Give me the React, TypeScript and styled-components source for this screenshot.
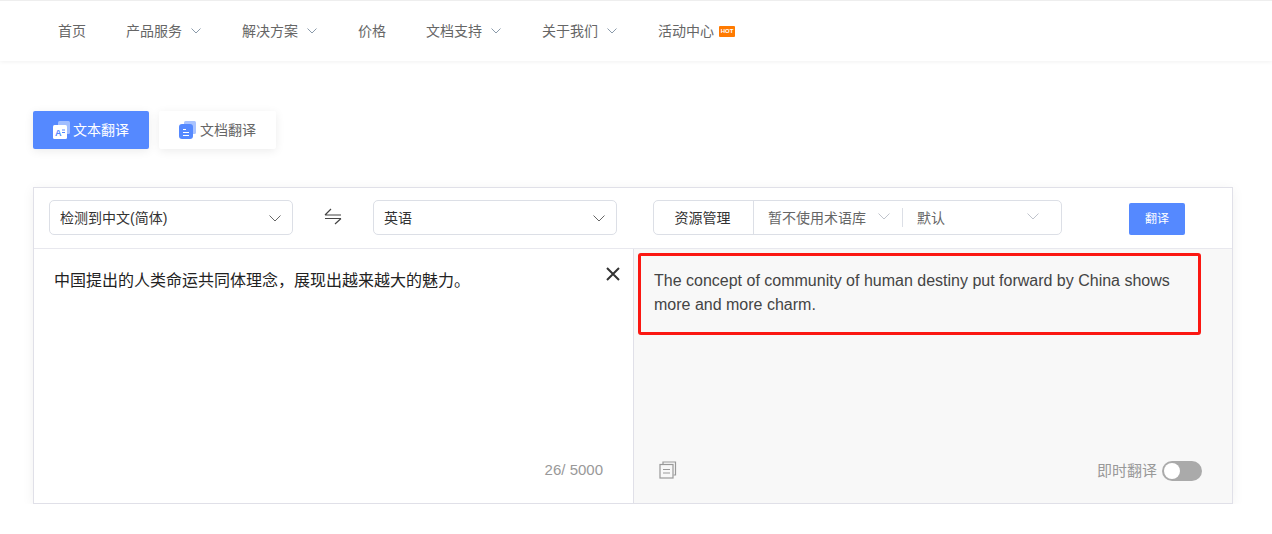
import styled, { createGlobalStyle } from "styled-components";

const GlobalStyle = createGlobalStyle`
  html, body {
    margin: 0;
    padding: 0;
    background: #fff;
  }
  body {
    font-family: "Liberation Sans", "Noto Sans CJK SC", sans-serif;
  }
  * {
    box-sizing: border-box;
  }
`;

const Nav = styled.nav`
  display: flex;
  align-items: center;
  gap: 40px;
  height: 61px;
  padding-left: 58px;
  border-top: 1px solid #eee;
  background: #fff;
  box-shadow: 0 1px 4px rgba(0, 0, 0, 0.06);
`;

const NavItem = styled.div`
  display: flex;
  align-items: center;
  gap: 5px;
  color: #666;
  font-size: 14px;
  line-height: 20px;
`;

const NavCaret = styled.svg`
  display: block;
  width: 10px;
  height: 6px;
  margin-left: 4px;
  margin-right: 1px;
  fill: none;
  stroke: #8a9aaa;
  stroke-width: 1;
`;

const HotBadge = styled.span`
  display: block;
  width: 16px;
  height: 11px;
  border-radius: 1px;
  background: #ff7a00;
  color: #fff;
  font-size: 6px;
  font-weight: 700;
  line-height: 11px;
  text-align: center;
`;

const Main = styled.main`
  padding: 50px 39px 0 33px;
`;

const Tabs = styled.div`
  display: flex;
  gap: 10px;
  margin-bottom: 38px;
`;

const Tab = styled.button<{ $active?: boolean }>`
  display: flex;
  align-items: center;
  justify-content: center;
  gap: ${(p) => (p.$active ? "3px" : "4px")};
  width: ${(p) => (p.$active ? "116px" : "117px")};
  height: 38px;
  padding: 0;
  border: none;
  border-radius: 2px;
  background: ${(p) => (p.$active ? "#5589ff" : "#fff")};
  box-shadow: 0 2px 10px rgba(0, 0, 0, 0.08);
  color: ${(p) => (p.$active ? "#fff" : "#666")};
  font-family: inherit;
  font-size: 14px;
`;

const TabLabel = styled.span`
  margin-bottom: 2px;
`;

const TabIcon = styled.svg`
  display: block;
  width: 17px;
  height: 18px;
`;

const Card = styled.section`
  height: 317px;
  border: 1px solid #e0e0e8;
  box-shadow: 0 2px 12px rgba(0, 0, 0, 0.06);
  display: flex;
  flex-direction: column;
`;

const Toolbar = styled.div`
  display: flex;
  height: 61px;
  border-bottom: 1px solid #e8e8ee;
`;

const ToolbarSide = styled.div`
  display: flex;
  align-items: center;
  width: 599px;
  padding-left: 15px;
  padding-bottom: 1px;
`;

const ToolbarRight = styled.div`
  display: flex;
  align-items: center;
  flex: 1;
  padding-left: 20px;
  padding-bottom: 1px;
`;

const Select = styled.div`
  display: flex;
  align-items: center;
  justify-content: space-between;
  width: 244px;
  height: 35px;
  padding: 0 11px 0 10px;
  border: 1px solid #dcdfe6;
  border-radius: 5px;
  color: #333;
  font-size: 14px;
`;

const FieldLabel = styled.span`
  margin-bottom: 2px;
`;

const SelectCaret = styled.svg<{ $light?: boolean }>`
  display: block;
  width: 12px;
  height: 7px;
  flex: none;
  margin-top: ${(p) => (p.$light ? "-3px" : "2px")};
  fill: none;
  stroke: ${(p) => (p.$light ? "#c0c4cc" : "#666")};
  stroke-width: 1;
`;

const SwapButton = styled.div`
  display: flex;
  justify-content: center;
  width: 80px;
  margin-top: -3px;
`;

const SwapIcon = styled.svg`
  display: block;
  width: 18px;
  height: 17px;
  fill: none;
  stroke: #444;
  stroke-width: 1.2;
`;

const ResourceGroup = styled.div`
  display: flex;
  align-items: center;
  width: 409px;
  height: 35px;
  border: 1px solid #dcdfe6;
  border-radius: 5px;
  font-size: 14px;
`;

const ResourceLabel = styled.div`
  display: flex;
  align-items: center;
  justify-content: center;
  width: 100px;
  height: 100%;
  padding-right: 2px;
  border-right: 1px solid #dcdfe6;
  color: #333;
`;

const ResourcePick = styled.div<{ $width: number; $divided?: boolean; $end: number }>`
  display: flex;
  align-items: center;
  justify-content: space-between;
  width: ${(p) => p.$width}px;
  height: 19px;
  padding: 0 ${(p) => p.$end}px 0 14px;
  border-right: ${(p) => (p.$divided ? "1px solid #dcdfe6" : "none")};
  color: #666;
  font-size: 14px;
`;

const TranslateButton = styled.button`
  width: 56px;
  height: 32px;
  margin-top: 2px;
  margin-left: 67px;
  padding: 0 0 2px;
  border: none;
  border-radius: 2px;
  background: #5589ff;
  color: #fff;
  font-family: inherit;
  font-size: 12px;
`;

const Panes = styled.div`
  display: flex;
  flex: 1;
  min-height: 0;
`;

const SourcePane = styled.div`
  display: flex;
  flex-direction: column;
  justify-content: space-between;
  width: 600px;
  padding: 20px 30px 21px 20px;
  border-right: 1px solid #e0e0e8;
`;

const SourceRow = styled.div`
  display: flex;
  justify-content: space-between;
  align-items: flex-start;
`;

const SourceText = styled.div`
  color: #222;
  font-size: 16px;
  line-height: 24px;
`;

const ClearIcon = styled.svg`
  display: block;
  width: 14px;
  height: 14px;
  margin-top: -2px;
  margin-right: -17px;
  fill: none;
  stroke: #333;
  stroke-width: 2;
`;

const Counter = styled.div`
  align-self: flex-end;
  color: #999;
  font-size: 15px;
  line-height: 24px;
`;

const ResultPane = styled.div`
  position: relative;
  flex: 1;
  display: flex;
  flex-direction: column;
  justify-content: space-between;
  padding: 20px 30px 21px 20px;
  background: #f8f8f8;
`;

const ResultText = styled.div`
  color: #444;
  font-size: 16px;
  line-height: 24px;
  width: 530px;
`;

const Highlight = styled.div`
  position: absolute;
  left: 4px;
  top: 4px;
  width: 563px;
  height: 82px;
  border: 3px solid #fb1712;
  border-radius: 3px;
`;

const ResultFooter = styled.div`
  display: flex;
  align-items: center;
  justify-content: space-between;
  height: 24px;
  padding-left: 5px;
`;

const CopyIcon = styled.svg`
  display: block;
  width: 18px;
  height: 18px;
  fill: none;
  stroke: #999;
  stroke-width: 1.2;
`;

const InstantToggle = styled.div`
  display: flex;
  align-items: center;
  gap: 5px;
  color: #999;
  font-size: 15px;
`;

const InstantLabel = styled.span`
  margin-bottom: 2px;
`;

const Switch = styled.div`
  display: flex;
  align-items: center;
  width: 40px;
  height: 20px;
  margin-top: 2px;
  padding-left: 2px;
  border-radius: 10px;
  background: #aaa;
`;

const SwitchKnob = styled.div`
  width: 16px;
  height: 16px;
  border-radius: 50%;
  background: #fff;
`;

const navItems = [
  { label: "首页" },
  { label: "产品服务", caret: true },
  { label: "解决方案", caret: true },
  { label: "价格" },
  { label: "文档支持", caret: true },
  { label: "关于我们", caret: true },
  { label: "活动中心", hot: true },
];

const CaretPath = () => <path d="M0.5 0.5 L5 5 L9.5 0.5" />;
const BigCaretPath = () => <path d="M0.5 0.5 L6 6 L11.5 0.5" />;

export default function App() {
  return (
    <>
      <GlobalStyle />
      <Nav>
        {navItems.map((item) => (
          <NavItem key={item.label}>
            {item.label}
            {item.caret && (
              <NavCaret viewBox="0 0 10 6">
                <CaretPath />
              </NavCaret>
            )}
            {item.hot && <HotBadge>HOT</HotBadge>}
          </NavItem>
        ))}
      </Nav>
      <Main>
        <Tabs>
          <Tab $active>
            <TabIcon viewBox="0 0 17 18">
              <rect x="5" y="0" width="12" height="13" rx="1.5" fill="#fff" fillOpacity="0.45" />
              <rect x="0" y="4" width="14" height="14" rx="1.5" fill="#fff" />
              <text x="2" y="14.5" fontSize="9" fontWeight="700" fill="#5589ff">
                A
              </text>
              <path d="M9 9h3M9 11.5h3" stroke="#5589ff" strokeWidth="1" />
            </TabIcon>
            <TabLabel>文本翻译</TabLabel>
          </Tab>
          <Tab>
            <TabIcon viewBox="0 0 17 18">
              <rect x="5" y="0" width="12" height="13" rx="1.5" fill="#a9c3ff" />
              <rect x="0" y="3" width="14" height="15" rx="3" fill="#5589ff" />
              <path d="M4 8.5h3M4 11.5h6M4 14.5h6" stroke="#fff" strokeWidth="1.2" />
            </TabIcon>
            <TabLabel>文档翻译</TabLabel>
          </Tab>
        </Tabs>
        <Card>
          <Toolbar>
            <ToolbarSide>
              <Select>
                <FieldLabel>检测到中文(简体)</FieldLabel>
                <SelectCaret viewBox="0 0 12 7">
                  <BigCaretPath />
                </SelectCaret>
              </Select>
              <SwapButton>
                <SwapIcon viewBox="0 0 18 17">
                  <path d="M1 7 H17 M1 7 L7 1 M1 10.5 H17 M17 10.5 L11 16" />
                </SwapIcon>
              </SwapButton>
              <Select>
                <FieldLabel>英语</FieldLabel>
                <SelectCaret viewBox="0 0 12 7">
                  <BigCaretPath />
                </SelectCaret>
              </Select>
            </ToolbarSide>
            <ToolbarRight>
              <ResourceGroup>
                <ResourceLabel>
                  <FieldLabel>资源管理</FieldLabel>
                </ResourceLabel>
                <ResourcePick $width={149} $divided $end={12}>
                  <FieldLabel>暂不使用术语库</FieldLabel>
                  <SelectCaret $light viewBox="0 0 12 7">
                    <BigCaretPath />
                  </SelectCaret>
                </ResourcePick>
                <ResourcePick $width={158} $end={22}>
                  <FieldLabel>默认</FieldLabel>
                  <SelectCaret $light viewBox="0 0 12 7">
                    <BigCaretPath />
                  </SelectCaret>
                </ResourcePick>
              </ResourceGroup>
              <TranslateButton>翻译</TranslateButton>
            </ToolbarRight>
          </Toolbar>
          <Panes>
            <SourcePane>
              <SourceRow>
                <SourceText>中国提出的人类命运共同体理念，展现出越来越大的魅力。</SourceText>
                <ClearIcon viewBox="0 0 14 14">
                  <path d="M1 1 L13 13 M13 1 L1 13" />
                </ClearIcon>
              </SourceRow>
              <Counter>26/ 5000</Counter>
            </SourcePane>
            <ResultPane>
              <ResultText>
                The concept of community of human destiny put forward by China shows more and more
                charm.
              </ResultText>
              <Highlight />
              <ResultFooter>
                <CopyIcon viewBox="0 0 18 18">
                  <path d="M4 3.5 V1 H16.5 V14 H14.5" />
                  <rect x="1" y="3.5" width="13" height="13.5" />
                  <path d="M4 8.5 H11 M4 12 H11" />
                </CopyIcon>
                <InstantToggle>
                  <InstantLabel>即时翻译</InstantLabel>
                  <Switch>
                    <SwitchKnob />
                  </Switch>
                </InstantToggle>
              </ResultFooter>
            </ResultPane>
          </Panes>
        </Card>
      </Main>
    </>
  );
}
